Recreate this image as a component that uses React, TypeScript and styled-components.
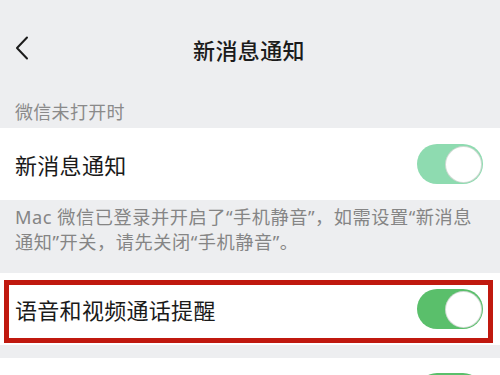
import React from "react";
import styled, { createGlobalStyle } from "styled-components";

const GlobalStyle = createGlobalStyle`
  html, body {
    margin: 0;
    padding: 0;
    background: #edeef0;
    font-family: "Noto Sans", "Noto Sans CJK SC", sans-serif;
  }
  * { box-sizing: border-box; }
`;

const Page = styled.div`
  width: 500px;
  height: 375px;
  overflow: hidden;
  background: #edeef0;
  display: flex;
  flex-direction: column;
`;

const NavBar = styled.div`
  position: relative;
  height: 98px;
  display: flex;
  align-items: center;
  justify-content: center;
  flex-shrink: 0;
`;

const BackButton = styled.div`
  position: absolute;
  left: 15px;
  top: 35px;
  width: 20px;
  height: 26px;
  display: flex;
  align-items: center;
`;

const Title = styled.div`
  font-size: 22px;
  font-weight: 500;
  color: #1b1b1b;
  letter-spacing: 0.4px;
  margin-left: -2px;
`;

const SectionLabel = styled.div`
  height: 30px;
  padding: 0 15px 4px;
  display: flex;
  align-items: center;
  font-size: 18px;
  letter-spacing: 0.3px;
  color: #8a8a8a;
  flex-shrink: 0;
`;

const Row = styled.div<{ $mt?: number }>`
  position: relative;
  height: 72px;
  flex-shrink: 0;
  margin-top: ${(p) => p.$mt ?? 0}px;
  background: #ffffff;
  display: flex;
  align-items: center;
  justify-content: space-between;
  padding: 0 17px 0 15px;
`;

const RowLabel = styled.div`
  font-size: 22px;
  color: #1a1a1a;
  letter-spacing: 0.3px;
`;

const Toggle = styled.div<{ $dim?: boolean }>`
  position: relative;
  width: 66px;
  height: 40px;
  border-radius: 20px;
  background: ${(p) => (p.$dim ? "#8edbb0" : "#5abf6b")};
  flex-shrink: 0;
`;

const Knob = styled.div`
  position: absolute;
  right: 1px;
  top: 1.5px;
  width: 37px;
  height: 37px;
  border-radius: 50%;
  background: #ffffff;
  border: 1.5px solid rgba(120, 150, 130, 0.35);
`;

const Note = styled.div`
  padding: 5px 15px 18px;
  font-size: 18.2px;
  letter-spacing: 0.55px;
  line-height: 25px;
  color: #858585;
  flex-shrink: 0;
  white-space: nowrap;
`;

const Highlight = styled.div`
  position: absolute;
  left: 4px;
  right: 7px;
  top: 7px;
  bottom: 2px;
  border: 5px solid #c0190f;
  pointer-events: none;
`;

const LastRow = styled(Row)`
  margin-top: 13px;
  align-items: flex-start;
  padding-top: 15px;
`;

function Chevron() {
  return (
    <svg width="14" height="24" viewBox="0 0 14 24" fill="none">
      <path d="M12 1.5 L2 12 L12 22.5" stroke="#1b1b1b" strokeWidth="2" strokeLinecap="round" strokeLinejoin="round" />
    </svg>
  );
}

function Switch({ dim }: { dim?: boolean }) {
  return (
    <Toggle $dim={dim}>
      <Knob />
    </Toggle>
  );
}

export default function App() {
  return (
    <Page>
      <GlobalStyle />
      <NavBar>
        <BackButton>
          <Chevron />
        </BackButton>
        <Title>新消息通知</Title>
      </NavBar>
      <SectionLabel>微信未打开时</SectionLabel>
      <Row>
        <RowLabel>新消息通知</RowLabel>
        <Switch dim />
      </Row>
      <Note>
        Mac 微信已登录并开启了“手机静音”，如需设置“新消息
        <br />
        通知”开关，请先关闭“手机静音”。
      </Note>
      <Row>
        <RowLabel>语音和视频通话提醒</RowLabel>
        <Switch />
        <Highlight />
      </Row>
      <LastRow>
        <span />
        <Switch />
      </LastRow>
    </Page>
  );
}
